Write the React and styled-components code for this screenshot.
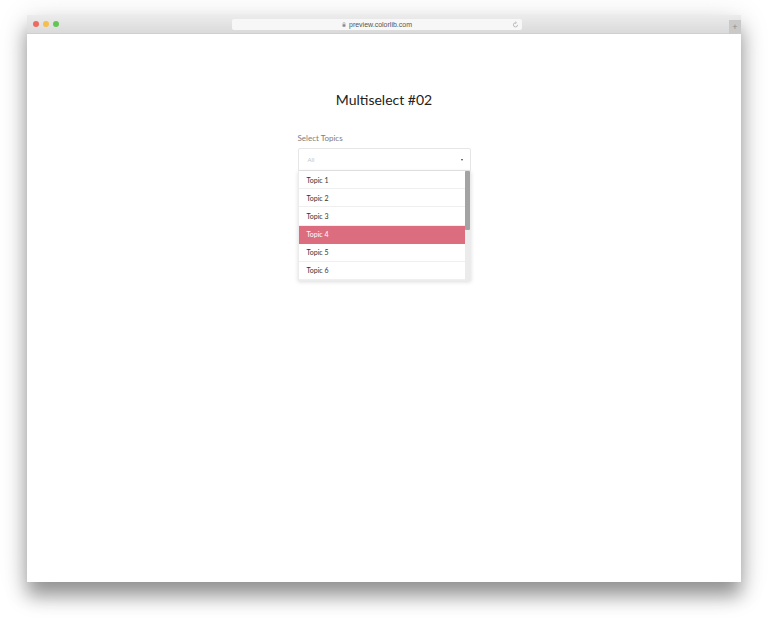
import styled, { createGlobalStyle } from "styled-components";

const GlobalStyle = createGlobalStyle`
  html, body {
    margin: 0;
    padding: 0;
    background: #ffffff;
  }
  body {
    font-family: Lato, "Noto Sans", "Liberation Sans", sans-serif;
  }
`;

const topics = ["Topic 1", "Topic 2", "Topic 3", "Topic 4", "Topic 5", "Topic 6"];

function App() {
  return (
    <Page>
      <GlobalStyle />
      <Window>
        <TitleBar>
          <Lights>
            <Light color="#ee6a5f" />
            <Light color="#f5be4f" />
            <Light color="#62c655" />
          </Lights>
          <UrlBar>
            <UrlText>
              <LockIcon viewBox="0 0 8 10">
                <path d="M2 4.5V3a2 2 0 0 1 4 0v1.5" fill="none" stroke="#8a8a8a" strokeWidth="1" />
                <rect x="1" y="4.5" width="6" height="5" rx="0.8" fill="#8a8a8a" />
              </LockIcon>
              preview.colorlib.com
            </UrlText>
            <ReloadIcon viewBox="0 0 10 10">
              <path d="M8 5.5A3 3 0 1 1 5 2.5" fill="none" stroke="#9a9a9a" strokeWidth="0.9" />
              <path d="M4.6 1 6.4 2.5 4.6 4" fill="none" stroke="#9a9a9a" strokeWidth="0.9" />
            </ReloadIcon>
          </UrlBar>
          <span />
          <PlusButton>+</PlusButton>
        </TitleBar>
        <Content>
          <Title>Multiselect #02</Title>
          <Field>
            <Label>Select Topics</Label>
            <SelectBox>
              <Placeholder>All</Placeholder>
              <Caret />
            </SelectBox>
            <Dropdown>
              <Options>
                {topics.map((t) => (
                  <Option key={t} selected={t === "Topic 4"}>
                    {t}
                  </Option>
                ))}
              </Options>
              <ScrollTrack>
                <ScrollThumb />
              </ScrollTrack>
            </Dropdown>
          </Field>
        </Content>
      </Window>
    </Page>
  );
}

const Page = styled.div`
  width: 768px;
  height: 622px;
  box-sizing: border-box;
  padding: 15px 27px 40px 27px;
  background: #ffffff;
  overflow: hidden;
`;

const Window = styled.div`
  height: 567px;
  display: flex;
  flex-direction: column;
  background: #ffffff;
  box-shadow: 0 14px 18px rgba(0, 0, 0, 0.38), 0 4px 30px rgba(0, 0, 0, 0.12);
`;

const TitleBar = styled.div`
  height: 19px;
  flex-shrink: 0;
  display: grid;
  grid-template-columns: 205px 290px 1fr 12px;
  align-items: center;
  background: linear-gradient(#ececec, #dadada);
  border-bottom: 1px solid #cfcfcf;
  box-sizing: border-box;
`;

const Lights = styled.div`
  display: flex;
  gap: 4px;
  padding-left: 6px;
`;

const Light = styled.span`
  width: 6px;
  height: 6px;
  border-radius: 50%;
  background: ${(p) => p.color};
`;

const UrlBar = styled.div`
  height: 11px;
  position: relative;
  display: flex;
  align-items: center;
  justify-content: center;
  background: #f7f7f7;
  border-radius: 2px;
`;

const UrlText = styled.span`
  display: flex;
  align-items: center;
  gap: 3px;
  font-size: 7px;
  color: #555;
  font-family: "Liberation Sans", Arial, sans-serif;
`;

const LockIcon = styled.svg`
  width: 4px;
  height: 5px;
`;

const ReloadIcon = styled.svg`
  position: absolute;
  right: 3px;
  top: 2px;
  width: 7px;
  height: 7px;
`;

const PlusButton = styled.div`
  align-self: end;
  height: 14px;
  margin-bottom: -1px;
  background: #c9c9c9;
  color: #8c8c8c;
  font-size: 9px;
  line-height: 14px;
  text-align: center;
  font-family: "Liberation Sans", Arial, sans-serif;
`;

const Content = styled.div`
  flex: 1;
  display: flex;
  flex-direction: column;
  align-items: center;
  padding-top: 57px;
`;

const Title = styled.h1`
  margin: 0;
  font-weight: 400;
  font-size: 14px;
  line-height: 18px;
  color: #222;
`;

const Field = styled.div`
  width: 173px;
  margin-top: 24px;
  display: flex;
  flex-direction: column;
`;

const Label = styled.div`
  font-size: 8px;
  color: #7d7d7d;
  line-height: 10px;
  margin-bottom: 5px;
`;

const SelectBox = styled.div`
  height: 23px;
  box-sizing: border-box;
  border: 1px solid #e6e6e6;
  border-radius: 2px 2px 0 0;
  display: flex;
  align-items: center;
  justify-content: space-between;
  padding: 0 7px 0 9px;
`;

const Placeholder = styled.span`
  font-size: 6px;
  color: #c4c4c4;
`;

const Caret = styled.span`
  width: 0;
  height: 0;
  border-left: 1.5px solid transparent;
  border-right: 1.5px solid transparent;
  border-top: 2px solid #444;
`;

const Dropdown = styled.div`
  display: flex;
  height: 110px;
  background: #fff;
  box-shadow: 0 1px 4px rgba(0, 0, 0, 0.14);
  border: 1px solid #ececec;
  border-top: none;
  box-sizing: border-box;
`;

const Options = styled.div`
  flex: 1;
  display: flex;
  flex-direction: column;
`;

const Option = styled.div`
  height: 18.2px;
  box-sizing: border-box;
  display: flex;
  align-items: center;
  padding-left: 8px;
  font-size: 7px;
  color: ${(p) => (p.selected ? "#fff" : "#333")};
  background: ${(p) => (p.selected ? "#dc6d7e" : "#fff")};
  border-bottom: 1px solid ${(p) => (p.selected ? "#dc6d7e" : "#efefef")};
`;

const ScrollTrack = styled.div`
  width: 5px;
  background: #ebebeb;
`;

const ScrollThumb = styled.div`
  height: 59px;
  background: #a3a3a3;
  border-radius: 1px;
`;

export default App;
